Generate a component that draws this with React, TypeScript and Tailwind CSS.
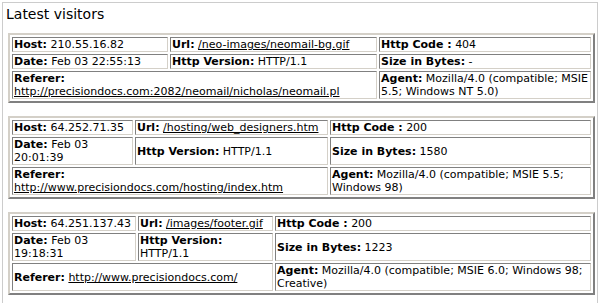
import type { ReactNode } from 'react';

type Visit = {
    host: string;
    url: string;
    code: string;
    date: string;
    version: string;
    size: string;
    referer: string;
    agent: string;
    cols: [number, number];
};

const VISITS: Visit[] = [
    {
        host: '210.55.16.82',
        url: '/neo-images/neomail-bg.gif',
        code: '404',
        date: 'Feb 03 22:55:13',
        version: 'HTTP/1.1',
        size: '-',
        referer: 'http://precisiondocs.com:2082/neomail/nicholas/neomail.pl',
        agent: 'Mozilla/4.0 (compatible; MSIE 5.5; Windows NT 5.0)',
        cols: [156, 207],
    },
    {
        host: '64.252.71.35',
        url: '/hosting/web_designers.htm',
        code: '200',
        date: 'Feb 03 20:01:39',
        version: 'HTTP/1.1',
        size: '1580',
        referer: 'http://www.precisiondocs.com/hosting/index.htm',
        agent: 'Mozilla/4.0 (compatible; MSIE 5.5; Windows 98)',
        cols: [121, 193],
    },
    {
        host: '64.251.137.43',
        url: '/images/footer.gif',
        code: '200',
        date: 'Feb 03 19:18:31',
        version: 'HTTP/1.1',
        size: '1223',
        referer: 'http://www.precisiondocs.com/',
        agent: 'Mozilla/4.0 (compatible; MSIE 6.0; Windows 98; Creative)',
        cols: [124, 135],
    },
];

function Cell({ children, colSpan }: { children: ReactNode; colSpan?: number }) {
    return (
        <td
            colSpan={colSpan}
            className="border border-t-[#808080] border-l-[#808080] border-r-[#d4d0c8] border-b-[#d4d0c8] px-px py-0 align-middle"
        >
            {children}
        </td>
    );
}

function Label({ children }: { children: ReactNode }) {
    return <b className="font-bold">{children}</b>;
}

function VisitTable({ visit }: { visit: Visit }) {
    return (
        <table className="w-[587px] table-fixed border-separate border-spacing-[2px] border-2 border-t-[#d4d0c8] border-l-[#d4d0c8] border-r-[#808080] border-b-[#808080]">
            <colgroup>
                <col style={{ width: visit.cols[0] }} />
                <col style={{ width: visit.cols[1] }} />
                <col />
            </colgroup>
            <tbody>
                <tr>
                    <Cell>
                        <Label>Host:</Label> {visit.host}
                    </Cell>
                    <Cell>
                        <Label>Url:</Label> <a className="underline">{visit.url}</a>
                    </Cell>
                    <Cell>
                        <Label>Http Code :</Label> {visit.code}
                    </Cell>
                </tr>
                <tr>
                    <Cell>
                        <Label>Date:</Label> {visit.date}
                    </Cell>
                    <Cell>
                        <Label>Http Version:</Label> {visit.version}
                    </Cell>
                    <Cell>
                        <Label>Size in Bytes:</Label> {visit.size}
                    </Cell>
                </tr>
                <tr>
                    <Cell colSpan={2}>
                        <Label>Referer:</Label> <a className="underline">{visit.referer}</a>
                    </Cell>
                    <Cell>
                        <Label>Agent:</Label> {visit.agent}
                    </Cell>
                </tr>
            </tbody>
        </table>
    );
}

export default function App() {
    return (
        <div className="bg-white p-[2px] font-['DejaVu_Sans',Verdana,sans-serif] text-black">
            <div className="w-[596px] border border-b-0 border-[#cccccc] pb-[12px]">
                <h1 className="pl-[3px] pt-[3px] text-[14px] leading-[17px] font-normal">Latest visitors</h1>
                <div className="mt-[10px] ml-[5px] flex flex-col gap-[13px] text-[11px] leading-[13px]">
                    {VISITS.map((visit) => (
                        <VisitTable key={visit.host} visit={visit} />
                    ))}
                </div>
            </div>
        </div>
    );
}
